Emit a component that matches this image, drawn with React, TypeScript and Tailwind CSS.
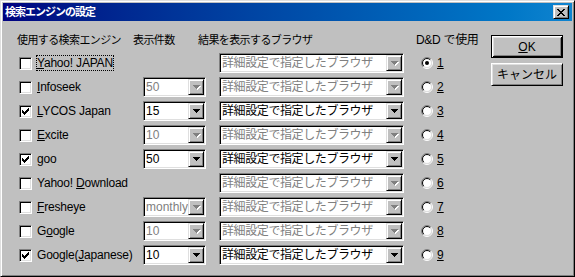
import React from "react";

const FONT = "font-[family-name:Liberation_Sans,Noto_Sans_CJK_JP,sans-serif]";
const SUNKEN =
  "border border-t-[#808080] border-l-[#808080] border-b-white border-r-white shadow-[inset_1px_1px_0_#000,inset_-1px_-1px_0_#dfdfdf]";
const RAISED =
  "border border-t-[#dfdfdf] border-l-[#dfdfdf] border-r-black border-b-black shadow-[inset_1px_1px_0_#fff,inset_-1px_-1px_0_#808080]";

function U({ t, i }: { t: string; i: number }) {
  return (
    <>
      {t.slice(0, i)}
      <span className="underline underline-offset-[1px]">{t[i]}</span>
      {t.slice(i + 1)}
    </>
  );
}

function Arrow({ disabled }: { disabled?: boolean }) {
  const rows = [
    [0, 7],
    [1, 5],
    [2, 3],
    [3, 1],
  ];
  return (
    <svg width="8" height="5" viewBox="0 0 8 5" shapeRendering="crispEdges">
      {disabled &&
        rows.map(([y, w]) => (
          <rect key={"s" + y} x={y + 1} y={y + 1} width={w} height={1} fill="#fff" />
        ))}
      {rows.map(([y, w]) => (
        <rect key={y} x={y} y={y} width={w} height={1} fill={disabled ? "#808080" : "#000"} />
      ))}
    </svg>
  );
}

function Combo({ w, value, disabled, jp }: { w: string; value: string; disabled?: boolean; jp?: boolean }) {
  return (
    <div className={`${w} h-[20px] ${SUNKEN} bg-white p-[1px] flex items-stretch`}>
      <div
        className={`flex-1 flex items-center pl-[1px] text-[12px] leading-[14px] whitespace-nowrap overflow-hidden ${
          jp ? "tracking-[-0.4px]" : ""
        } ${disabled ? "text-[#808080]" : "text-black"}`}
      >
        {value}
      </div>
      <div className={`w-[16px] h-[16px] shrink-0 bg-[#c0c0c0] ${RAISED} flex items-center justify-center pt-[1px] pl-[1px]`}>
        <Arrow disabled={disabled} />
      </div>
    </div>
  );
}

function Check({ checked }: { checked?: boolean }) {
  return (
    <div className={`w-[13px] h-[13px] shrink-0 bg-white ${SUNKEN} relative`}>
      {checked && (
        <svg className="absolute left-[-1px] top-[-1px]" width="13" height="13" viewBox="0 0 13 13" shapeRendering="crispEdges">
          {[
            [3, 5],
            [4, 6],
            [5, 7],
            [6, 6],
            [7, 5],
            [8, 4],
            [9, 3],
          ].map(([x, y]) => (
            <rect key={x} x={x} y={y} width={1} height={3} fill="#000" />
          ))}
        </svg>
      )}
    </div>
  );
}

function Radio({ checked }: { checked?: boolean }) {
  const c = 6;
  const arc = (r: number, color: string, tl: boolean) => {
    const d = r * Math.SQRT1_2;
    const bl = `${c - d},${c + d}`;
    const tr = `${c + d},${c - d}`;
    return tl ? (
      <path d={`M${bl} A${r} ${r} 0 0 1 ${tr}`} stroke={color} strokeWidth={1} fill="none" />
    ) : (
      <path d={`M${tr} A${r} ${r} 0 0 1 ${bl}`} stroke={color} strokeWidth={1} fill="none" />
    );
  };
  return (
    <svg width="12" height="12" viewBox="0 0 12 12" className="shrink-0">
      <circle cx={c} cy={c} r={4.5} fill="#fff" />
      {arc(5.5, "#808080", true)}
      {arc(5.5, "#fff", false)}
      {arc(4.5, "#000", true)}
      {arc(4.5, "#dfdfdf", false)}
      {checked && <circle cx={c} cy={c} r={2} fill="#000" />}
    </svg>
  );
}

type Row = {
  label: React.ReactNode;
  checked?: boolean;
  count?: string;
  countOn?: boolean;
  browserOn?: boolean;
  focus?: boolean;
};

const rows: Row[] = [
  { label: <U t="Yahoo! JAPAN" i={0} />, focus: true },
  { label: <U t="Infoseek" i={0} />, count: "50" },
  { label: <U t="LYCOS Japan" i={0} />, checked: true, count: "15", countOn: true, browserOn: true },
  { label: <U t="Excite" i={0} />, count: "10" },
  { label: <U t="goo" i={0} />, checked: true, count: "50", countOn: true, browserOn: true },
  { label: <U t="Yahoo! Download" i={7} /> },
  { label: <U t="Fresheye" i={0} />, count: "monthly" },
  { label: <U t="Google" i={1} />, count: "10" },
  { label: <U t="Google(Japanese)" i={7} />, checked: true, count: "10", countOn: true, browserOn: true },
];

function CloseGlyph() {
  const px = [
    [0, 0], [1, 0], [6, 0], [7, 0],
    [1, 1], [2, 1], [5, 1], [6, 1],
    [2, 2], [3, 2], [4, 2], [5, 2],
    [3, 3], [4, 3],
    [2, 4], [3, 4], [4, 4], [5, 4],
    [1, 5], [2, 5], [5, 5], [6, 5],
    [0, 6], [1, 6], [6, 6], [7, 6],
  ];
  return (
    <svg width="8" height="7" viewBox="0 0 8 7" shapeRendering="crispEdges">
      {px.map(([x, y], i) => (
        <rect key={i} x={x} y={y} width={1} height={1} fill="#000" />
      ))}
    </svg>
  );
}

export default function App() {
  return (
    <div
      className={`${FONT} w-[575px] h-[277px] bg-[#c0c0c0] border border-t-[#dfdfdf] border-l-[#dfdfdf] border-r-black border-b-black shadow-[inset_1px_1px_0_#fff,inset_-1px_-1px_0_#808080] p-[2px] flex flex-col text-black select-none`}
    >
      <div className="h-[18px] shrink-0 flex items-center bg-linear-to-r from-[#000080] to-[#1084d0] pl-[2px] pr-[3px]">
        <div className="flex-1 text-white font-bold text-[11px] tracking-[-1px] leading-[14px]">検索エンジンの設定</div>
        <div className={`w-[16px] h-[14px] bg-[#c0c0c0] ${RAISED} flex items-center justify-center`}>
          <CloseGlyph />
        </div>
      </div>

      <div className="flex-1 flex">
        <div className="w-[488px] pl-[14px] pt-[12px] flex flex-col">
          <div className="h-[14px] flex items-center text-[11px] tracking-[-0.6px] leading-[14px] whitespace-nowrap">
            <div className="w-[116px]">使用する検索エンジン</div>
            <div className="w-[65px]">表示件数</div>
            <div className="w-[218px]">結果を表示するブラウザ</div>
            <div className="text-[12px] tracking-[-0.3px]">D&amp;D で使用</div>
          </div>
          <div className="mt-[6px] flex flex-col gap-[4px]">
            {rows.map((r, i) => (
              <div key={i} className="h-[20px] flex items-center text-[12px] leading-[14px]">
                <div className="w-[126px] flex items-center pl-[2px]">
                  <Check checked={r.checked} />
                  <span
                    className={`ml-[4px] border whitespace-nowrap tracking-[-0.2px] ${
                      r.focus ? "border-dotted border-black" : "border-transparent"
                    }`}
                  >
                    {r.label}
                  </span>
                </div>
                <div className="w-[64px]">
                  {r.count && <Combo w="w-[63px]" value={r.count} disabled={!r.countOn} />}
                </div>
                <div className="ml-[12px]">
                  <Combo w="w-[185px]" value="詳細設定で指定したブラウザ" disabled={!r.browserOn} jp />
                </div>
                <div className="ml-[17px] flex items-center">
                  <Radio checked={i === 0} />
                  <span className="ml-[4px] underline underline-offset-[1px]">{i + 1}</span>
                </div>
              </div>
            ))}
          </div>
        </div>

        <div className="pt-[14px] flex flex-col gap-[5px]">
          <div className="w-[72px] h-[23px] border border-black bg-[#c0c0c0] shadow-[inset_1px_1px_0_#fff,inset_-1px_-1px_0_#000,inset_2px_2px_0_#dfdfdf,inset_-2px_-2px_0_#808080] flex items-center justify-center text-[12px] leading-[14px]">
            <U t="OK" i={0} />
          </div>
          <div className="w-[72px] h-[23px] border border-t-white border-l-white border-r-black border-b-black bg-[#c0c0c0] shadow-[inset_1px_1px_0_#dfdfdf,inset_-1px_-1px_0_#808080] flex items-center justify-center text-[12px] leading-[14px]">
            キャンセル
          </div>
        </div>
      </div>
    </div>
  );
}
